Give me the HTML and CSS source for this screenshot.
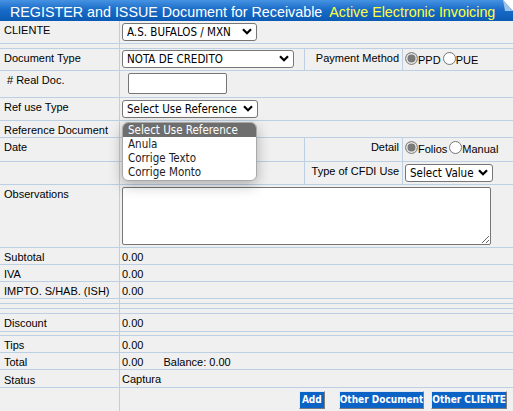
FILE: index.html
```html
<!DOCTYPE html>
<html lang="en">
  <head>
    <meta charset="UTF-8" />
    <title>Register and Issue Document</title>
    <link rel="stylesheet" href="styles.css">
  </head>
  <body>
    <!-- barra de titulo -->
    <div class="title">
      REGISTER and ISSUE Document for Receivable <span class="title-hl">Active Electronic Invoicing</span>
      <svg class="fold" width="10" height="12" viewBox="0 0 10 12">
        <polygon points="0,0 10,0 10,11" fill="#ffffff" />
        <polygon points="0,0 10,11 2,11" fill="#9cc2ee" />
      </svg>
    </div>

    <form class="grid">
      <!-- cliente -->
      <div class="cell lbl">CLIENTE</div>
      <div class="cell val span3 pad-sel">
        <span class="sel w135">
          <select><option>A.S. BUFALOS / MXN</option></select>
          <svg class="chev" width="10" height="7" viewBox="0 0 10 7"><path d="M1 1.2l4 4 4-4" fill="none" stroke="#000" stroke-width="2.2" /></svg>
        </span>
      </div>
      <div class="cell"></div>
      <div class="cell span3"></div>

      <!-- tipo de documento -->
      <div class="cell lbl">Document Type</div>
      <div class="cell val pad-sel1">
        <span class="sel w171">
          <select><option>NOTA DE CREDITO</option></select>
          <svg class="chev" width="10" height="7" viewBox="0 0 10 7"><path d="M1 1.2l4 4 4-4" fill="none" stroke="#000" stroke-width="2.2" /></svg>
        </span>
      </div>
      <div class="cell lbl right">Payment Method</div>
      <div class="cell radios">
        <label><input type="radio" name="pm" checked />PPD</label>
        <label><input type="radio" name="pm" />PUE</label>
      </div>

      <div class="cell lbl indent"># Real Doc.</div>
      <div class="cell val span3 pad-inp"><input class="txt" type="text" /></div>

      <!-- referencia -->
      <div class="cell lbl">Ref use Type</div>
      <div class="cell val span3 pad-sel">
        <span class="sel w136">
          <select><option>Select Use Reference</option></select>
          <svg class="chev" width="10" height="7" viewBox="0 0 10 7"><path d="M1 1.2l4 4 4-4" fill="none" stroke="#000" stroke-width="2.2" /></svg>
          <!-- lista abierta -->
          <ul class="drop">
            <li class="on">Select Use Reference</li>
            <li>Anula</li>
            <li>Corrige Texto</li>
            <li>Corrige Monto</li>
          </ul>
        </span>
      </div>

      <div class="cell lbl">Reference Document</div>
      <div class="cell val span3"></div>

      <div class="cell lbl">Date</div>
      <div class="cell val"></div>
      <div class="cell lbl right">Detail</div>
      <div class="cell radios r2">
        <label><input type="radio" name="det" checked />Folios</label>
        <label><input type="radio" name="det" />Manual</label>
      </div>

      <div class="cell"></div>
      <div class="cell"></div>
      <div class="cell lbl right">Type of CFDI Use</div>
      <div class="cell pad-sel2">
        <span class="sel w88">
          <select><option>Select Value</option></select>
          <svg class="chev" width="10" height="7" viewBox="0 0 10 7"><path d="M1 1.2l4 4 4-4" fill="none" stroke="#000" stroke-width="2.2" /></svg>
        </span>
      </div>

      <div class="cell lbl">Observations</div>
      <div class="cell val span3 pad-obs"><textarea class="obs"></textarea></div>

      <!-- importes -->
      <div class="cell lbl">Subtotal</div>
      <div class="cell val span3 num">0.00</div>
      <div class="cell lbl">IVA</div>
      <div class="cell val span3 num">0.00</div>
      <div class="cell lbl">IMPTO. S/HAB. (ISH)</div>
      <div class="cell val span3 num">0.00</div>

      <div class="cell"></div>
      <div class="cell span3"></div>
      <div class="cell"></div>
      <div class="cell span3"></div>
      <div class="cell"></div>
      <div class="cell span3"></div>

      <div class="cell lbl">Discount</div>
      <div class="cell val span3 num">0.00</div>
      <div class="cell"></div>
      <div class="cell span3"></div>

      <div class="cell lbl">Tips</div>
      <div class="cell val span3 num">0.00</div>
      <div class="cell lbl">Total</div>
      <div class="cell val span3 num">0.00 <span class="bal">Balance: 0.00</span></div>
      <div class="cell lbl low">Status</div>
      <div class="cell val span3 num">Captura</div>

      <!-- botones -->
      <div class="cell"></div>
      <div class="cell span3 btns">
        <button type="button" class="btn b-add">Add</button>
        <button type="button" class="btn b-doc">Other Document</button>
        <button type="button" class="btn">Other CLIENTE</button>
      </div>
    </form>
  </body>
</html>
```

FILE: styles.css
```css
* {
  margin: 0;
  padding: 0;
  box-sizing: border-box;
}
ul {
  list-style: none;
}

body {
  width: 513px;
  background: #f0f0f0;
  font-family: "Liberation Sans", Arial, sans-serif;
  font-size: 11px;
  color: #000;
  overflow: hidden;
}

.title {
  position: relative;
  height: 21px;
  padding: 2px 0 0 10px;
  line-height: 20px;
  white-space: nowrap;
  font-size: 14.3px;
  color: #fff;
  background: linear-gradient(#4693e2, #1a6cc8 45%, #0b5bb4);
}
.title-hl {
  margin-left: 3px;
  color: #ffff3c;
}
.title .fold {
  position: absolute;
  top: 0;
  right: 0;
}

/* la cuadricula: el hueco de 1px pinta las lineas */
.grid {
  display: grid;
  grid-template-columns: 119px 184px 97px 1fr;
  grid-template-rows: 22px 4px 21px 26px 22px 16px 23px 22px 62px 16px 16px 16px 4px 4px 4px 17px 3px 16px 16px 17px 40px;
  gap: 1px;
  background: #bccfe3;
}

.cell {
  background: #f0f0f0;
  min-width: 0;
}
.span3 {
  grid-column: span 3;
}

.lbl {
  padding: 3px 4px 0;
  white-space: nowrap;
}
.lbl.indent {
  padding-left: 7px;
}
.lbl.right {
  text-align: right;
  padding-right: 3px;
}
.lbl.low {
  padding-top: 4px;
}

.num {
  padding: 3px 2px 0;
}
.bal {
  margin-left: 17px;
}

/* selects */
.pad-sel {
  padding: 2px 0 0 2px;
}
.pad-sel1 {
  padding: 1px 0 0 2px;
}
.pad-sel2 {
  padding: 2px 0 0 2px;
}
.sel {
  position: relative;
  display: inline-block;
  height: 18px;
}
.sel select {
  appearance: none;
  width: 100%;
  height: 18px;
  padding: 0 14px 0 4px;
  border: 1px solid #767676;
  border-radius: 3px;
  background: #fff;
  font-family: "DejaVu Sans Condensed", "DejaVu Sans", sans-serif;
  font-stretch: condensed;
  font-size: 11.5px;
  color: #000;
  line-height: 16px;
}
.sel .chev {
  position: absolute;
  top: 5px;
  right: 5px;
  pointer-events: none;
}
.w135 { width: 135px; }
.w136 { width: 136px; }
.w171 { width: 172px; }
.w88 { width: 88px; }

/* lista desplegada */
.drop {
  position: absolute;
  top: 22px;
  left: 0;
  width: 135px;
  padding: 0 0 1px;
  border: 1px solid #a9a9a9;
  border-radius: 6px;
  background: #fff;
  overflow: hidden;
  box-shadow: 0 4px 14px rgba(0, 0, 0, 0.28);
  font-family: "DejaVu Sans Condensed", "DejaVu Sans", sans-serif;
  font-stretch: condensed;
  font-size: 11.5px;
  color: #1b1b1b;
  z-index: 5;
}
.drop li {
  height: 14px;
  line-height: 14px;
  padding-left: 5px;
  white-space: nowrap;
}
.drop li.on {
  background: #6e6e6e;
  color: #fff;
}

/* radios */
.radios {
  display: flex;
  align-items: flex-end;
  padding: 0 0 4px 2px;
}
.radios.r2 {
  padding-bottom: 6px;
}
.radios label {
  display: flex;
  align-items: flex-end;
  margin-right: 2px;
}
.radios input {
  appearance: none;
  width: 13px;
  height: 13px;
  margin-bottom: 1px;
  border: 1px solid #767676;
  border-radius: 50%;
  background: #fff;
}
.radios input:checked {
  background: #7a7a7a;
  box-shadow: inset 0 0 0 1.5px #e6e6e6;
  border-color: #8a8a8a;
}

.pad-inp {
  padding: 2px 0 0 8px;
}
.txt {
  width: 99px;
  height: 21px;
  border: 1px solid #767676;
  border-radius: 2px;
  background: #fff;
}

.pad-obs {
  padding: 2px 0 0 2px;
}
.obs {
  display: block;
  width: 369px;
  height: 58px;
  border: 1px solid #767676;
  border-radius: 2px;
  background: #fff;
  resize: both;
}

/* botones */
.btns {
  display: flex;
  justify-content: flex-end;
  align-items: flex-start;
  padding: 3px 6px 0 0;
}
.btn {
  height: 18px;
  padding: 0;
  border: 1px solid;
  border-color: #dfe9f6 #7c7c7c #7c7c7c #dfe9f6;
  background: #0c63c6;
  color: #fff;
  font-family: "DejaVu Sans Condensed", "DejaVu Sans", sans-serif;
  font-stretch: condensed;
  font-weight: bold;
  font-size: 10px;
  line-height: 16px;
}
.b-add {
  padding: 0 2px;
  margin-right: 14px;
}
.b-doc {
  margin-right: 7px;
}
```
